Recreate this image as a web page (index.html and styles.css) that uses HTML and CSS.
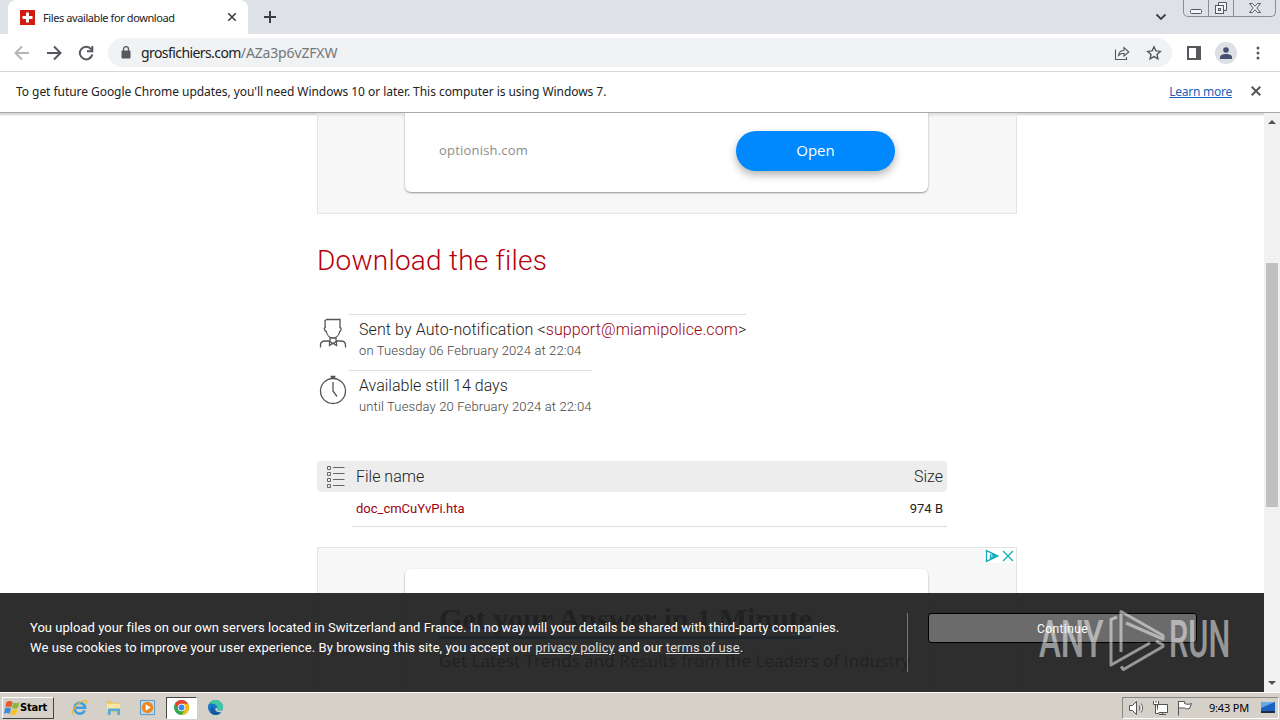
FILE: index.html
```
<!DOCTYPE html>
<html lang="en">
<head>
  <meta charset="UTF-8" />
  <meta name="viewport" content="width=device-width, initial-scale=1.0"/>
  <title>Files available for download</title>
  <link rel="stylesheet" href="styles.css">
</head>
<body>
  <div class="desktop">
    <div class="tab-strip">
      <div class="tab">
        <svg class="favicon" viewBox="0 0 15 15"><path fill="#d01c12" d="M0 0h15v15H0z"/><path fill="#fff" d="M6 2.500h3V6h3.500v3H9v3.500H6V9H2.500V6H6z"/></svg>
        <span class="tab-title">Files available for download</span>
        <svg class="tab-close" viewBox="0 0 10 10"><path d="M1.300 1.300l7.400 7.400M8.700 1.300L1.300 8.700"/></svg>
      </div>
      <svg class="new-tab" viewBox="0 0 12 12"><path d="M6 0v12M0 6h12"/></svg>
      <svg class="tab-search" viewBox="0 0 12 8"><path d="M1.500 1.500L6 6l4.500-4.500"/></svg>
      <div class="window-buttons">
        <span><svg viewBox="0 0 14 12"><rect x="1.500" y="7.500" width="11" height="4" rx="1"/></svg></span>
        <span><svg viewBox="0 0 14 12"><path d="M4.500 3V.5h8v8H10"/><rect x="1.500" y="3.500" width="8" height="8"/><rect x="4.500" y="6.500" width="2" height="2"/></svg></span>
        <span class="wide"><svg viewBox="0 0 14 12"><path d="M1.500 1.500h3L7 4.300l2.500-2.800h3L8.800 6l3.700 4.500h-3L7 7.700l-2.500 2.800h-3L5.200 6z"/></svg></span>
      </div>
    </div>

    <div class="toolbar">
      <svg class="nav back" viewBox="0 0 16 16"><path d="M15 8H2M8 1.500L1.500 8 8 14.500"/></svg>
      <svg class="nav" viewBox="0 0 16 16"><path d="M1 8h13M8 1.500L14.500 8 8 14.500"/></svg>
      <svg class="nav" viewBox="0 0 16 16"><path d="M13.200 4.300A6.300 6.300 0 1 0 14.300 9.500M14.300 1v5.300H9"/></svg>
      <div class="address-bar">
        <svg class="lock" viewBox="0 0 10 13"><rect x="0.500" y="4.500" width="9" height="8" rx="1"/><path d="M2.500 5V3.200a2.500 2.500 0 0 1 5 0V5"/></svg>
        <span class="url">grosfichiers.com<span class="path">/AZa3p6vZFXW</span></span>
        <svg class="share" viewBox="0 0 16 16"><path d="M1.500 4.500v10h11v-2.500M4.500 10.500c.5-3 2.500-5 5.500-5.200V2.500L14.800 7 10 11V8.300c-2.500 0-4 .7-5.500 2.200z"/></svg>
        <svg class="star" viewBox="0 0 16 16"><path d="M8 1.800l1.900 4.100 4.400.5-3.300 3 .9 4.400L8 11.600l-3.900 2.200.9-4.400-3.300-3 4.400-.5z"/></svg>
      </div>
      <svg class="side-panel" viewBox="0 0 14 14"><path d="M1 1h12v12H1z" fill="none" stroke="#55585c" stroke-width="2"/><path d="M9 1h4v12H9z" fill="#55585c"/></svg>
      <span class="avatar"><svg viewBox="0 0 12 12"><circle cx="6" cy="3" r="2.800"/><path d="M0 12v-1.800C0 8 3 7 6 7s6 1 6 3.200V12z"/></svg></span>
      <svg class="menu" viewBox="0 0 4 14"><circle cx="2" cy="2" r="1.500"/><circle cx="2" cy="7" r="1.500"/><circle cx="2" cy="12" r="1.500"/></svg>
    </div>

    <div class="infobar">
      <span class="info-text">To get future Google Chrome updates, you'll need Windows 10 or later. This computer is using Windows 7.</span>
      <span class="learn-more">Learn more</span>
      <svg class="info-close" viewBox="0 0 10 10"><path d="M.7.7l8.600 8.600M9.300.7L.7 9.300"/></svg>
    </div>

    <div class="viewport">
      <main class="page">
        <section class="ad ad-top">
          <div class="ad-card">
            <span class="ad-domain">optionish.com</span>
            <span class="ad-open">Open</span>
          </div>
        </section>

        <h1>Download the files</h1>

        <div class="detail">
          <svg class="detail-icon" viewBox="0 0 28 32"><path d="M6 2.500L8 1.500h13v8c1.500 0 1.500 3.500-.3 4-.7 4-3.700 6.500-6.700 6.500s-6-2.500-6.700-6.500C5 13 5 9.500 6.200 9.500zM11 19.500v3M17 19.500v3M1.500 29.500V27c0-3 2-4 5-4h4l3.500 3 3.500-3h4c3 0 5 1 5 4v2.500M10.500 23v4.500L14 25l3.500 2.500V23"/></svg>
          <div class="detail-text">
            <p class="sent">Sent by Auto-notification &lt;<a>support@miamipolice.com</a>&gt;</p>
            <small>on Tuesday 06 February 2024 at 22:04</small>
          </div>
        </div>
        <div class="detail">
          <svg class="detail-icon" viewBox="0 0 28 32"><circle cx="14" cy="17" r="12.500"/><path d="M11.500 2.500h5M12 3.500h4M14 8v9l4 5.500"/></svg>
          <div class="detail-text">
            <p>Available still 14 days</p>
            <small>until Tuesday 20 February 2024 at 22:04</small>
          </div>
        </div>

        <div class="file-head">
          <svg class="list-icon" viewBox="0 0 19 24"><path d="M1.500 1.500h3v3h-3zM1.500 7.500h3v3h-3zM1.500 13.500h3v3h-3zM1.500 19.500h3v3h-3zM7 2.500h11.500M7 8.500h11.500M7 14.500h11.500M7 20.500h11.500"/></svg>
          <span class="head-name">File name</span>
          <span>Size</span>
        </div>
        <div class="file-row">
          <a>doc_cmCuYvPi.hta</a>
          <span>974 B</span>
        </div>

        <section class="ad ad-bottom">
          <div class="ad-choices">
            <svg viewBox="0 0 14 14"><path d="M1.500 1.500v11l11.500-5.500zM5.500 5.500v4l4-2.500-3-1.500"/></svg>
            <svg viewBox="0 0 14 14"><path d="M2 2l10 10M12 2L2 12"/></svg>
          </div>
          <div class="ad-card">
            <h2>Get your Answer in 1 Minute</h2>
            <p>Get Latest Trends and Results from the Leaders of Industry</p>
          </div>
        </section>
      </main>

      <div class="scrollbar">
        <svg viewBox="0 0 8 4"><path d="M0 4l4-4 4 4z"/></svg>
        <div class="thumb"></div>
        <svg viewBox="0 0 8 4"><path d="M0 0l4 4 4-4z"/></svg>
      </div>

      <div class="cookies">
        <div class="cookie-text">
          <p class="line-one">You upload your files on our own servers located in Switzerland and France. In no way will your details be shared with third-party companies.</p>
          <p class="line-two">We use cookies to improve your user experience. By browsing this site, you accept our <u>privacy policy</u> and our <u>terms of use</u>.</p>
        </div>
        <button>Continue</button>
      </div>
    </div>

    <div class="taskbar">
      <div class="start">
        <svg viewBox="0 0 16 16"><path fill="#e8572a" d="M2.500 2c2-1.500 4-1.300 6 0L7.200 7.500c-2-1.300-4-1.300-6 0z"/><path fill="#86b83c" d="M9.200 2.500c2 1 4 1 6.300-.3L14 7.800c-2 1.300-4 1.300-6.100.2z"/><path fill="#3e8bd8" d="M1 8.500c2-1.300 4-1.300 6 0L5.700 14c-2-1.300-4-1.300-5.700 0z"/><path fill="#f8c12c" d="M7.700 9c2 1 4 1 6-.2L12.300 14.300c-2 1.300-4 1.300-6 .2z"/></svg>
        <span>Start</span>
      </div>
      <span class="task"><svg viewBox="0 0 18 18"><path fill="none" stroke="#3d9fe0" stroke-width="2.800" d="M14.500 12.200A5.700 5.700 0 1 1 15 9.300H5"/><path fill="none" stroke="#edb92e" stroke-width="1.300" d="M3 16C-1 16 3 8 9 4s9-3 7 1"/></svg></span>
      <span class="task"><svg viewBox="0 0 18 18"><path fill="#e9c55c" d="M2 2h5l1 2h8v10H2z"/><path fill="#f9e6a0" d="M2 5h14v8H2z"/><path fill="#58acd6" d="M3 10h13v7h-3v-4H6v4H3z"/></svg></span>
      <span class="task"><svg viewBox="0 0 18 18"><path fill="#b8d8ee" stroke="#5795c3" d="M1.500 1.500h15v15h-15z"/><circle cx="9" cy="9" r="6" fill="#f08519"/><path fill="#fff" d="M7 5.500v7L12.500 9z"/></svg></span>
      <span class="task active"><svg viewBox="0 0 18 18"><circle cx="9" cy="9" r="8" fill="#33a852"/><path fill="#e94335" d="M2.100 5A8 8 0 0 1 15.900 5H9l-3.500 6z"/><path fill="#fbbc05" d="M15.900 5A8 8 0 0 1 9 17l3.500-6L9 5z"/><circle cx="9" cy="9" r="4" fill="#fff"/><circle cx="9" cy="9" r="3.100" fill="#4285f4"/></svg></span>
      <span class="task"><svg viewBox="0 0 18 18"><circle cx="9" cy="9" r="8" fill="#1677c9"/><path fill="#3fc9a0" d="M2 5.300A8 8 0 0 1 17 9c0 3-3 4-5.500 3-1.500-.7 0-1.500-.3-3C10.500 6 6 4 2 5.300z"/><path fill="#1557a0" d="M7 8c-1 4 2 7 8 6-3 4-9 3.500-11 0-1-3 0-5 3-6z"/><path fill="#d5d1c8" d="M11.200 9c.3 1.500-1.200 2.300.3 3 2 1 4 .5 5.500-.7l-1.500 2.700c-4 .5-7-1.500-6.500-4z"/></svg></span>
      <div class="tray">
        <svg class="tray-icon" viewBox="0 0 18 16"><path d="M1.500 5.500h3l4-4v13l-4-4h-3zM11 5.500c1 1.500 1 3.500 0 5M13 3.500c2 2.500 2 6.500 0 9"/></svg>
        <svg class="tray-icon" viewBox="0 0 18 16"><path fill="#aaa" d="M5.500 4.500h10v8h-10z"/><path d="M5.500 4.500h10v8h-10zM7 14.500h7M10.500 12.500v2"/><path d="M1.500 1v3.500h5V1M4 1v2M3.500 4.500v9H7"/></svg>
        <svg class="tray-icon" viewBox="0 0 18 16"><path d="M2.500 1v14.500M2.500 1.500h6v2c2 1 5 1 7 0l-2 5c-2 .5-4 .5-5-.5h-6"/></svg>
        <span class="clock">9:43 PM</span>
        <svg class="show-desktop" viewBox="0 0 16 14"><path fill="#1e62c0" d="M1 1h14v9H1z"/><path fill="#66a7e8" d="M1 1h14L1 7z"/><path fill="#1b2c47" d="M1 10h14v2H1z"/></svg>
      </div>
    </div>

    <div class="watermark">
      <span class="any">ANY</span>
      <svg viewBox="0 0 56 62"><path d="M8 8l-6 2.500V56l39-22M12 43V2.500L54 26.500v3.500L17 14M12 57.500l2.500 3L54 37.500V36l-7-4"/></svg>
      <span class="run">RUN</span>
    </div>
  </div>
</body>
</html>
```
FILE: styles.css
```
* {
  box-sizing: border-box;
}

body {
  margin: 0;
  font-family: "Noto Sans", sans-serif;
  color: #222;
}

p, h1, h2 {
  margin: 0;
  font-weight: 300;
}

svg {
  display: block;
  flex: none;
}

.desktop {
  position: relative;
  display: flex;
  flex-direction: column;
  width: 1280px;
  height: 720px;
  overflow: hidden;
  background: #fff;
  white-space: nowrap;
}

/* browser chrome */
.tab-strip {
  display: flex;
  height: 34px;
  padding: 0 4px 0 8px;
  background: #dee1e6;
}

.tab {
  display: flex;
  align-items: center;
  width: 240px;
  padding: 0 11px 0 12px;
  background: #fff;
  border-radius: 8px 8px 0 0;
}

.favicon {
  width: 15px;
  height: 15px;
}

.tab-title {
  flex: 1;
  margin-left: 8px;
  font-size: 11px;
  letter-spacing: -0.41px;
}

.tab-close {
  width: 10px;
  height: 10px;
  fill: none;
  stroke: #3c4043;
  stroke-width: 1.6;
}

.new-tab {
  width: 12px;
  height: 12px;
  margin: 11px 0 0 16px;
  stroke: #3c4043;
  stroke-width: 2;
}

.tab-search {
  width: 12px;
  height: 8px;
  margin: 13px 16px 0 auto;
  fill: none;
  stroke: #3c4043;
  stroke-width: 1.8;
}

.window-buttons {
  display: flex;
  width: 93px;
  height: 17px;
  border: 1px solid #8b8e94;
  border-top: 0;
  border-radius: 0 0 5px 5px;
}

.window-buttons span {
  display: flex;
  justify-content: center;
  width: 25px;
  padding-top: 2px;
  border-right: 1px solid #8b8e94;
}

.window-buttons .wide {
  width: 41px;
  border-right: 0;
}

.window-buttons svg {
  width: 14px;
  height: 12px;
  fill: #f4f5f7;
  stroke: #55585e;
}

.toolbar {
  display: flex;
  align-items: center;
  height: 38px;
  padding: 0 20px 0 14px;
  border-bottom: 1px solid #d5d7da;
}

.nav {
  width: 16px;
  height: 16px;
  margin-right: 16px;
  fill: none;
  stroke: #55585c;
  stroke-width: 2;
}

.back {
  stroke: #b4b6b9;
}

.address-bar {
  display: flex;
  align-items: center;
  width: 1064px;
  height: 29px;
  margin-left: -2px;
  padding: 0 10px 0 13px;
  border-radius: 15px;
  background: #f0f2f4;
}

.lock {
  width: 10px;
  height: 13px;
  fill: #55585c;
}

.lock path {
  fill: none;
  stroke: #55585c;
  stroke-width: 1.3;
}

.url {
  flex: 1;
  margin-left: 10px;
  font-size: 14px;
  letter-spacing: -0.58px;
}

.url .path {
  color: #74777b;
  letter-spacing: -0.15px;
}

.share, .star {
  width: 16px;
  height: 16px;
  margin-left: 16px;
  fill: none;
  stroke: #55585c;
  stroke-width: 1.4;
}

.share {
  stroke-width: 1.1;
}

.side-panel {
  width: 14px;
  height: 14px;
  margin-left: 15px;
}

.avatar {
  display: flex;
  align-items: center;
  justify-content: center;
  width: 22px;
  height: 22px;
  margin-left: 14px;
  border-radius: 50%;
  background: #dcdfe4;
}

.avatar svg {
  width: 12px;
  height: 12px;
  fill: #435070;
}

.menu {
  width: 4px;
  height: 14px;
  margin-left: auto;
  fill: #55585c;
}

.infobar {
  display: flex;
  align-items: center;
  height: 41px;
  padding: 0 19px 2px 16px;
  font-size: 12px;
  letter-spacing: -0.05px;
  border-bottom: 1px solid #a9a9a9;
}

.info-text {
  flex: 1;
}

.learn-more {
  color: #1a5fb8;
  letter-spacing: -0.25px;
  text-decoration: underline;
}

.info-close {
  width: 10px;
  height: 10px;
  margin-left: 19px;
  fill: none;
  stroke: #55585c;
  stroke-width: 2;
}

/* page */
.viewport {
  position: relative;
  display: flex;
  height: 579px;
  overflow: hidden;
  box-shadow: inset 0 3px 2px -1px #d3d3d3;
}

.page {
  flex: 1;
  padding-left: 317px;
  font-family: Roboto, sans-serif;
  font-weight: 300;
}

.ad {
  width: 700px;
  padding: 0 87px;
  background: #f7f7f7;
  border: 1px solid #e3e3e3;
}

.ad-card {
  width: 523px;
  background: #fff;
  border-radius: 6px;
  box-shadow: 0 1px 2px rgba(0, 0, 0, 0.4);
}

.ad-top {
  height: 101px;
  border-top: 0;
  background: linear-gradient(#ddd, #f7f7f7 4px);
}

.ad-top .ad-card {
  display: flex;
  justify-content: space-between;
  height: 79px;
  padding: 18px 33px 0 34px;
  border-radius: 0 0 6px 6px;
}

.ad-domain {
  margin-top: 10px;
  font: 13px "Open Sans", sans-serif;
  letter-spacing: 0.2px;
  color: #8c8c8c;
}

.ad-open {
  width: 159px;
  height: 40px;
  border-radius: 20px;
  background: #0088ff;
  box-shadow: 0 4px 8px rgba(0, 0, 0, 0.3);
  color: #fff;
  font: 15px/39px "Open Sans", sans-serif;
  text-align: center;
}

h1 {
  margin: 29px 0 36px;
  font-size: 28px;
  line-height: 35px;
  letter-spacing: 0.22px;
  color: #b8000b;
}

.page a {
  color: #9c0010;
}

.detail {
  display: flex;
  align-items: flex-start;
  height: 56px;
}

.detail-icon {
  width: 28px;
  height: 32px;
  margin: 4px 2px 0;
  fill: none;
  stroke: #555;
  stroke-width: 1.3;
}

.detail-text {
  padding: 5px 0 0 10px;
  border-top: 1px solid #ddd;
}

.detail-text p {
  font-size: 16px;
  line-height: 20px;
}

.detail-text .sent {
  letter-spacing: 0.1px;
}

.detail-text small {
  display: block;
  margin-top: 2px;
  font-size: 13px;
  line-height: 18px;
  letter-spacing: 0.14px;
  color: #444;
}

.file-head {
  display: flex;
  align-items: center;
  width: 630px;
  height: 31px;
  margin-top: 35px;
  padding: 0 4px 0 9px;
  border-radius: 4px;
  background: #ededed;
  font-size: 16px;
}

.list-icon {
  width: 19px;
  height: 24px;
  margin-right: 11px;
  fill: none;
  stroke: #666;
}

.head-name {
  flex: 1;
}

.file-row {
  display: flex;
  justify-content: space-between;
  width: 595px;
  height: 35px;
  margin-left: 35px;
  padding: 0 4px;
  border-bottom: 1px solid #ddd;
  font-size: 13px;
  font-weight: 400;
  line-height: 33px;
}

.ad-bottom {
  position: relative;
  height: 160px;
  margin-top: 20px;
  padding-top: 21px;
}

.ad-bottom .ad-card {
  height: 150px;
  padding: 33px 34px;
}

.ad-bottom h2 {
  width: 373px;
  font: bold 30px/34px "Liberation Serif", serif;
  border-bottom: 3px solid #0a86ff;
}

.ad-bottom p {
  margin-top: 8px;
  font: 17px/28px "Open Sans", sans-serif;
  letter-spacing: 0.07px;
}

.ad-choices {
  position: absolute;
  top: 0;
  right: 0;
  display: flex;
  gap: 2px;
  padding: 1px 1px 0;
  background: #fff;
}

.ad-choices svg {
  width: 14px;
  height: 14px;
  fill: none;
  stroke: #16aebd;
  stroke-width: 1.4;
}

.scrollbar {
  display: flex;
  flex-direction: column;
  justify-content: space-between;
  align-items: center;
  width: 16px;
  padding: 7px 0;
  background: #f1f1f1;
}

.scrollbar svg {
  width: 8px;
  height: 4px;
  fill: #505050;
}

.thumb {
  width: 12px;
  height: 244px;
  margin-top: -36px;
  background: #c1c1c1;
}

/* cookie banner lies over the page */
.cookies {
  position: absolute;
  left: 0;
  bottom: 0;
  display: flex;
  width: 1264px;
  height: 99px;
  padding: 20px 30px;
  background: rgba(33, 33, 33, 0.94);
  color: #fff;
  font-family: Roboto, sans-serif;
}

.cookie-text {
  width: 878px;
  height: 59px;
  padding-top: 5px;
  border-right: 1px solid #777;
  font-size: 13px;
  line-height: 20px;
}

.cookie-text p {
  font-weight: 400;
}

.line-one {
  letter-spacing: 0.025px;
}

.line-two {
  letter-spacing: 0.085px;
}

.cookies u {
  color: #ddd;
}

.cookies button {
  width: 269px;
  height: 30px;
  margin-left: 20px;
  padding: 2px 0 0;
  background: #6b6b6b;
  border: 1px solid #000;
  border-radius: 3px;
  color: #fff;
  font: 12px Roboto, sans-serif;
  letter-spacing: 0.4px;
}

/* taskbar */
.taskbar {
  display: flex;
  align-items: center;
  height: 28px;
  padding: 2px 1px 0 2px;
  border-top: 1px solid #fff;
  background: #d5d1c8;
}

.start {
  display: flex;
  align-items: center;
  width: 52px;
  height: 22px;
  margin-right: 10px;
  padding-left: 1px;
  border: 1px solid;
  border-color: #fff #444 #444 #fff;
  font: bold 11px "DejaVu Sans Condensed", "DejaVu Sans", sans-serif;
  letter-spacing: -0.2px;
  color: #000;
}

.start svg {
  width: 16px;
  height: 16px;
}

.task {
  display: flex;
  align-items: center;
  justify-content: center;
  width: 31px;
  height: 22px;
  margin-right: 3px;
}

.task svg {
  width: 17px;
  height: 17px;
}

.active {
  background: #fff;
  border: 1px solid;
  border-color: #444 #fff #fff #444;
}

.tray {
  display: flex;
  align-items: center;
  width: 157px;
  height: 22px;
  margin-left: auto;
  padding-left: 5px;
  border: 1px solid;
  border-color: #888 #fff #fff #888;
}

.tray-icon {
  width: 18px;
  height: 16px;
  margin-right: 6px;
  fill: #fff;
  stroke: #555;
}

.clock {
  width: 51px;
  margin-left: 9px;
  font-size: 11px;
  letter-spacing: -0.2px;
  color: #000;
}

.show-desktop {
  width: 16px;
  height: 14px;
}

/* translucent logo over the whole screen */
.watermark {
  position: absolute;
  left: 1039px;
  top: 609px;
  display: flex;
  height: 62px;
  color: #fff;
  font: 500 52px/62px Roboto, sans-serif;
  opacity: 0.5;
}

.watermark span {
  width: 65px;
  transform: scaleX(0.63);
  transform-origin: left;
}

.watermark .run {
  transform: scaleX(0.59);
}

.watermark svg {
  width: 56px;
  height: 62px;
  margin: 0 4px 0 5px;
  fill: none;
  stroke: #fff;
  stroke-width: 3;
  stroke-linejoin: round;
}
```
